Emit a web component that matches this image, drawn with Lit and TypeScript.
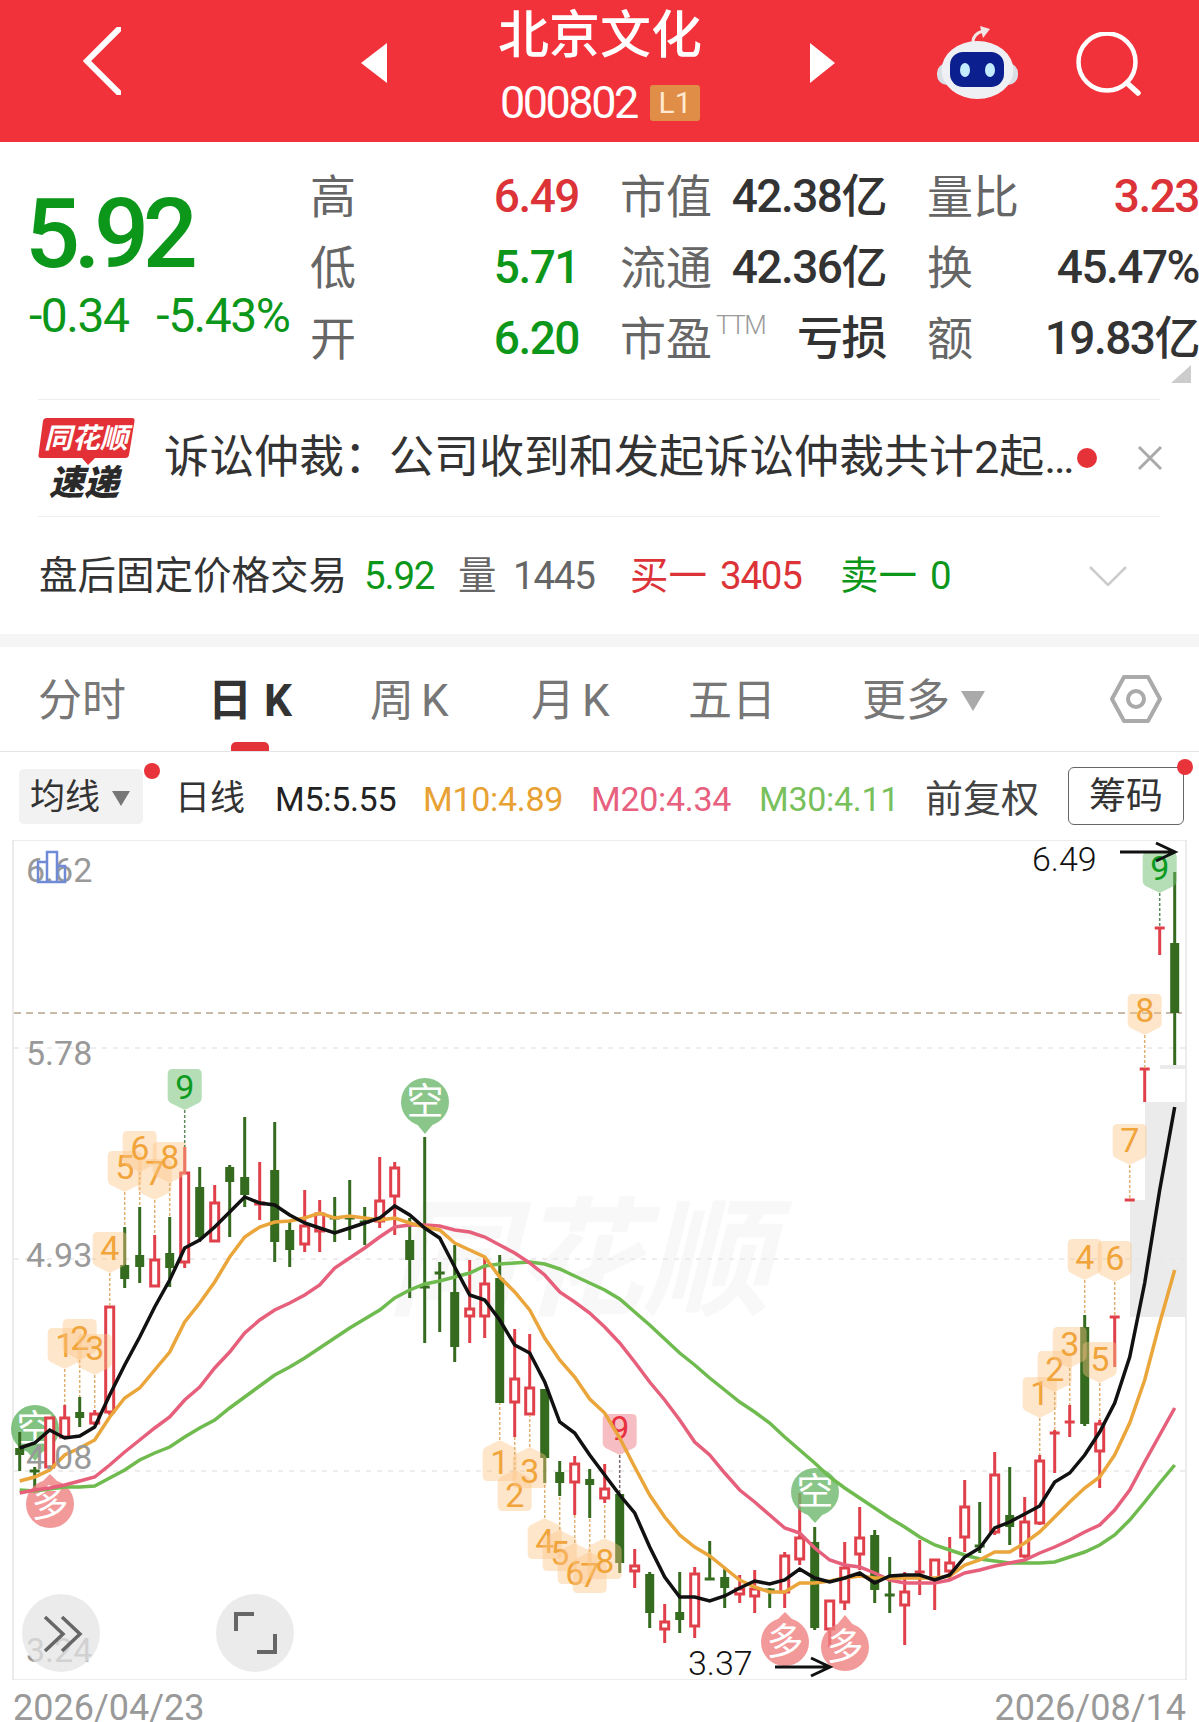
import { LitElement, html, css, svg } from "lit";
import { customElement } from "lit/decorators.js";

type C = [number, number, number, number, "r" | "g"];
const X = (i: number) => 19.7 + 15 * i;
const candles: C[] = [
  [1432,1471,1448,1455,"g"],[1467,1489,1471,1471,"g"],[1417,1468,1417,1468,"r"],[1405,1438,1417,1438,"r"],[1397,1427,1412,1418,"g"],
  [1410,1425,1413,1424,"r"],[1306,1415,1306,1413,"r"],[1227,1288,1265,1279,"g"],[1207,1283,1255,1267,"g"],[1235,1287,1259,1287,"r"],
  [1217,1287,1253,1268,"g"],[1147,1268,1172,1263,"r"],[1167,1242,1187,1237,"g"],[1185,1242,1202,1242,"r"],[1165,1237,1167,1182,"g"],
  [1117,1207,1177,1195,"g"],[1162,1220,1202,1205,"r"],[1122,1262,1170,1242,"g"],[1222,1267,1230,1250,"g"],[1190,1252,1225,1245,"r"],
  [1200,1252,1213,1232,"r"],[1197,1242,1218,1218,"g"],[1180,1240,1218,1218,"g"],[1207,1245,1222,1222,"g"],[1157,1228,1200,1222,"r"],
  [1162,1235,1167,1197,"r"],[1218,1298,1240,1260,"g"],[1137,1343,1287,1287,"g"],[1262,1332,1273,1273,"g"],[1245,1362,1292,1347,"g"],
  [1260,1343,1308,1317,"r"],[1257,1338,1283,1317,"r"],[1255,1403,1278,1403,"g"],[1329,1437,1378,1403,"r"],[1334,1415,1387,1415,"r"],
  [1389,1483,1389,1458,"g"],[1461,1496,1472,1483,"g"],[1456,1515,1463,1483,"r"],[1469,1518,1479,1485,"g"],[1464,1503,1488,1499,"r"],
  [1494,1573,1494,1563,"g"],[1549,1588,1565,1572,"r"],[1572,1628,1574,1613,"g"],[1604,1643,1621,1630,"r"],[1572,1633,1612,1620,"g"],
  [1567,1638,1573,1627,"r"],[1541,1580,1579,1579,"g"],[1567,1608,1577,1588,"g"],[1575,1603,1588,1595,"r"],[1570,1613,1588,1597,"r"],
  [1588,1608,1590,1590,"g"],[1552,1608,1555,1593,"r"],[1493,1565,1537,1560,"r"],[1527,1630,1542,1628,"g"],[1600,1647,1600,1630,"r"],
  [1542,1610,1567,1603,"r"],[1507,1570,1537,1555,"r"],[1530,1603,1535,1590,"g"],[1557,1613,1595,1595,"g"],[1572,1645,1591,1606,"r"],
  [1540,1595,1572,1572,"r"],[1560,1610,1559,1580,"r"],[1537,1580,1562,1572,"r"],[1480,1552,1506,1538,"r"],[1502,1553,1546,1546,"g"],
  [1452,1535,1474,1533,"r"],[1467,1545,1515,1527,"g"],[1497,1558,1521,1557,"r"],[1455,1525,1460,1524,"r"],[1430,1473,1433,1433,"r"],
  [1405,1437,1422,1422,"r"],[1315,1426,1327,1424,"g"],[1420,1488,1423,1452,"r"],[1316,1367,1317,1317,"r"],[1199,1201,1200,1200,"r"],
  [1068,1102,1069,1069,"r"],[927,955,928,928,"r"],[872,1065,943,1013,"g"],
];
const black = [1448,1443,1430,1438,1436,1427,1395,1365,1337,1307,1280,1248,1240,1227,1212,1197,1203,1205,1215,1223,1228,1233,1228,1223,1218,1206,1215,1228,1238,1267,1295,1300,1320,1345,1353,1382,1422,1433,1455,1475,1495,1513,1547,1577,1597,1597,1601,1596,1588,1581,1584,1580,1569,1578,1582,1578,1573,1583,1576,1575,1575,1580,1575,1557,1548,1528,1522,1514,1506,1482,1473,1455,1432,1403,1357,1283,1190,1107];
const orange = [1481,1477,1470,1455,1448,1440,1417,1398,1388,1370,1352,1322,1303,1282,1257,1237,1227,1222,1221,1218,1213,1218,1216,1218,1220,1218,1223,1227,1230,1243,1250,1257,1277,1292,1310,1338,1360,1377,1399,1413,1438,1467,1495,1517,1535,1547,1556,1568,1580,1587,1592,1592,1583,1583,1581,1578,1576,1578,1578,1578,1578,1578,1576,1565,1560,1552,1552,1543,1532,1517,1502,1488,1477,1455,1423,1380,1323,1270];
const pink = [1493,1490,1488,1485,1481,1477,1465,1452,1440,1428,1417,1400,1387,1368,1352,1333,1320,1310,1303,1295,1285,1268,1258,1248,1237,1227,1225,1225,1226,1230,1232,1237,1245,1253,1263,1275,1292,1302,1313,1327,1343,1362,1382,1400,1420,1442,1455,1473,1490,1502,1515,1528,1533,1548,1560,1565,1567,1573,1580,1583,1583,1583,1580,1573,1570,1566,1563,1560,1553,1547,1540,1532,1525,1510,1490,1462,1435,1408];
const green = [1490,1491,1489,1487,1487,1486,1478,1470,1460,1453,1447,1437,1428,1420,1408,1397,1386,1375,1367,1358,1348,1338,1328,1319,1310,1298,1290,1284,1281,1277,1273,1266,1264,1263,1262,1264,1269,1276,1283,1290,1299,1312,1325,1339,1353,1365,1378,1390,1402,1412,1423,1437,1450,1463,1477,1488,1498,1508,1518,1527,1537,1545,1550,1555,1559,1561,1563,1563,1563,1562,1557,1552,1545,1535,1520,1502,1483,1465];

type M = [string, number, number, number, number, "o" | "g" | "r"];
const downMarks: M[] = [
  ["1",3,1369,1345,1405,"o"],["2",4,1360,1338,1397,"o"],["3",5,1375,1348,1410,"o"],["4",6,1273,1248,1306,"o"],
  ["5",7,1192,1167,1227,"o"],["6",8,1172,1148,1207,"o"],["7",9,1200,1173,1235,"o"],["8",10,1183,1157,1217,"o"],["9",11,1110,1087,1147,"g"],
  ["9",40,1455,1428,1494,"r"],
  ["1",68,1418,1393,1455,"o"],["2",69,1392,1369,1430,"o"],["3",70,1368,1344,1405,"o"],["4",71,1280,1257,1315,"o"],
  ["5",72,1383,1359,1420,"o"],["6",73,1282,1258,1316,"o"],["7",74,1165,1140,1198,"o"],["8",75,1035,1010,1068,"o"],["9",76,893,868,927,"g"],
];
const upMarks: M[] = [
  ["1",32,1440,1462,1403,"o"],["2",33,1470,1495,1437,"o"],["3",34,1447,1471,1415,"o"],["4",35,1518,1541,1483,"o"],
  ["5",36,1530,1553,1496,"o"],["6",37,1543,1573,1515,"o"],["7",38,1552,1575,1518,"o"],["8",39,1538,1561,1503,"o"],
];
const kinds = {
  o: { fill: "rgba(253,196,130,.42)", text: "#f0a43a", stem: "#e0b070" },
  g: { fill: "rgba(110,190,110,.5)", text: "#0c9a20", stem: "#5c8a5c" },
  r: { fill: "rgba(235,110,120,.45)", text: "#e8303f", stem: "#7a6a6a" },
};
const path = (a: number[]) => a.map((y, i) => `${i ? "L" : "M"}${X(i).toFixed(1)} ${y}`).join(" ");

function candle(c: C, i: number) {
  const [hi, lo, t, b, k] = c;
  const x = X(i);
  const col = k === "r" ? "#e0404a" : "#356b1f";
  const wick = svg`<path d="M${x} ${hi}V${lo}" stroke=${col} stroke-width="3"/>`;
  if (t === b) return svg`${wick}<path d="M${x - 5} ${t}h10" stroke=${col} stroke-width="3"/>`;
  if (k === "g") return svg`${wick}<rect x=${x - 4.5} y=${t} width="9" height=${b - t} fill=${col}/>`;
  const topW = svg`<path d="M${x} ${hi}V${t}M${x} ${b}V${lo}" stroke=${col} stroke-width="3"/>`;
  return svg`${topW}<rect x=${x - 4} y=${t + 1} width="8" height=${Math.max(b - t - 2, 1)} fill="#fff" stroke=${col} stroke-width="3"/>`;
}
function mark(m: M, up: boolean) {
  const [d, i, tip, cy, end, kind] = m;
  const x = X(i), K = kinds[kind], s = up ? -1 : 1;
  const top = tip - s * 41;
  const p = `M${x - 12} ${top}H${x + 12}Q${x + 17} ${top} ${x + 17} ${top + s * 5}V${top + s * 29}Q${x + 17} ${top + s * 33} ${x + 12} ${top + s * 35}L${x + 2} ${tip - s}Q${x} ${tip} ${x - 2} ${tip - s}L${x - 12} ${top + s * 35}Q${x - 17} ${top + s * 33} ${x - 17} ${top + s * 29}V${top + s * 5}Q${x - 17} ${top} ${x - 12} ${top}Z`;
  return svg`<path d="M${x} ${tip}V${end}" stroke=${K.stem} stroke-width="1.5" stroke-dasharray="3 2"/>
    <path d=${p} fill=${K.fill}/>
    <text class="digit" x=${x} y=${cy + 12} fill=${K.text}>${d}</text>`;
}
function pin(x: number, cy: number, tip: number, ch: string, fill: string, op: number) {
  const s = tip > cy ? 1 : -1;
  return svg`<g opacity=${op}><circle cx=${x} cy=${cy} r="24" fill=${fill}/>
    <path d="M${x - 9} ${cy + s * 21}L${x} ${tip}L${x + 9} ${cy + s * 21}Z" fill=${fill}/>
    <text class="pinch" x=${x} y=${cy + 13} >${ch}</text></g>`;
}

@customElement("app-root")
export class AppRoot extends LitElement {
  static styles = css`
    :host { display: block; width: 1199px; height: 1722px; overflow: hidden; background: #fff; font-family: Roboto, "Noto Sans CJK SC", sans-serif; color: #333; }
    .top { display: flex; align-items: flex-start; height: 142px; background: #f2323a; color: #fff; }
    .top svg { display: block; flex: none; }
    .back { margin: 27px 0 0 83px; }
    .tri-l { margin: 43px 0 0 240px; }
    .tri-r { margin: 43px 0 0 110px; }
    .robot { margin: 25px 0 0 102px; }
    .search { margin: 32px 0 0 58px; }
    .mid { width: 200px; margin-left: 113px; flex: none; }
    .title { font: 500 51px/62px "Noto Sans CJK SC", sans-serif; margin: 0 0 0 -2px; white-space: nowrap; width: 204px; }
    .code { display: flex; align-items: center; margin-top: 23px; height: 36px; }
    .code b { font: 400 45px/52px Roboto, sans-serif; letter-spacing: -2.500px; width: 150px; }
    .l1 { width: 50px; height: 36px; background: #e08d48; color: #ffe9d0; border-radius: 3px; font: 400 30px/36px Roboto, sans-serif; text-align: center; }

    .quote { display: flex; height: 257px; padding-left: 25px; position: relative; }
    .pricecol { width: 285px; flex: none; }
    .big { font: 500 97px/110px Roboto, sans-serif; letter-spacing: -6.500px; color: #0c971b; margin-top: 37px; white-space: nowrap; }
    .chg { display: flex; font: 400 48px/56px Roboto, sans-serif; color: #0c971b; margin: -1px 0 0 4px; letter-spacing: -1.500px; white-space: nowrap; }
    .chg span + span { margin-left: 28px; }
    .qgrid { display: grid; grid-template-columns: 269px 266px 272px; column-gap: 41px; grid-auto-rows: 71px; padding-top: 18px; }
    .qgrid > div { display: flex; justify-content: space-between; align-items: center; white-space: nowrap; }
    .lb { font: 400 46px/60px "Noto Sans CJK SC", sans-serif; color: #666; margin-top: -6px; }
    .lb sup { font: 300 26px/26px Roboto, sans-serif; color: #999; vertical-align: 21px; margin-left: 4px; letter-spacing: -1.500px; }
    .v { font: 500 46px/58px Roboto, "Noto Sans CJK SC", sans-serif; color: #333; letter-spacing: -1.500px; }
    .red { color: #dc3338; }
    .grn { color: #0c971b; }
    .corner { position: absolute; right: 8px; bottom: 16px; }

    .notice { display: flex; align-items: center; height: 116px; margin: 0 39px 0 38px; border-top: 1px solid #eee; border-bottom: 1px solid #eee; }
    .notice .txt { font: 400 45px/62px Roboto, "Noto Sans CJK SC", sans-serif; color: #333; margin-left: 28px; white-space: nowrap; width: 909px; }
    .notice .dot { width: 20px; height: 20px; border-radius: 50%; background: #e53238; margin-left: 4px; flex: none; }
    .notice .x { margin-left: 40px; flex: none; }
    .logo { flex: none; display: block; margin-top: 8px; }

    .after { display: flex; align-items: center; height: 117px; padding-left: 40px; font: 400 38.500px/54px Roboto, "Noto Sans CJK SC", sans-serif; white-space: nowrap; }
    .after .a1 { color: #333; margin-left: -1px; width: 325px; }
    .after .a2 { color: #0c971b; width: 94px; letter-spacing: -1.200px; }
    .after .a3 { color: #666; width: 55px; }
    .after .a4 { color: #666; width: 117px; letter-spacing: -1.200px; }
    .after .a5 { color: #dc3338; width: 90px; }
    .after .a6 { color: #dc3338; width: 120px; letter-spacing: -1.200px; }
    .after .a7 { color: #0c971b; width: 90px; }
    .after .a8 { color: #0c971b; width: 159px; }
    .band { height: 13px; background: #f5f5f5; }

    .tabs { display: grid; grid-template-columns: 170px 162px 161px 157px 174px 246px 52px; align-items: center; height: 104px; padding-left: 38px; border-bottom: 1px solid #e4e4e4; font: 400 44px/60px Roboto, "Noto Sans CJK SC", sans-serif; color: #777; position: relative; }
    .tabs > span { padding-top: 4px; }
    .tabs > svg { margin-left: 2px; }
    .tabs .on { color: #333; font-weight: 700; }
    .tabs .k { margin-left: 7px; }
    .tabs .on .k { margin-left: 12px; }
    .more { display: flex; align-items: center; }
    .more svg { margin-left: 11px; }
    .ul { position: absolute; left: 231px; bottom: 0; width: 38px; height: 9px; background: #e33339; border-radius: 5px 5px 0 0; }

    .ma { display: flex; align-items: center; height: 88px; font: 400 35px/50px Roboto, "Noto Sans CJK SC", sans-serif; white-space: nowrap; position: relative; }
    .jx { display: flex; align-items: center; width: 124px; height: 55px; margin-left: 19px; padding: 4px 0 0 11px; box-sizing: border-box; background: #f2f2f2; border-radius: 5px; color: #333; flex: none; }
    .jx svg { margin-left: 12px; }
    .rd { position: absolute; width: 16px; height: 16px; border-radius: 50%; background: #e9333a; }
    .rd.a { left: 144px; top: 11px; }
    .rd.b { left: 1177px; top: 7px; }
    .rx, .m5, .m10, .m20, .m30, .fq { padding-top: 6px; }
    .rx { margin-left: 32px; color: #333; width: 100px; }
    .m5 { color: #222; width: 148px; font-size: 34px; letter-spacing: -.3px; }
    .m10 { color: #e8a133; width: 168px; font-size: 34px; letter-spacing: -.3px; }
    .m20 { color: #e7607e; width: 168px; font-size: 34px; letter-spacing: -.3px; }
    .m30 { color: #78c05c; width: 166px; font-size: 34px; letter-spacing: -.3px; }
    .fq { font-size: 38px; color: #444; width: 143px; }
    .cm { width: 116px; height: 58px; box-sizing: border-box; border: 1px solid #666; border-radius: 6px; font-size: 37px; line-height: 58px; text-align: center; color: #333; flex: none; }

    .chart { display: block; width: 1199px; height: 840px; }
    .chart text { font-family: Roboto, "Noto Sans CJK SC", sans-serif; }
    .axis { font-size: 34px; fill: #999; }
    .digit { font-size: 34px; text-anchor: middle; }
    .pinch { font-size: 37px; text-anchor: middle; fill: #fff; }
    .note { font-size: 34px; fill: #111; font-weight: 300; }
    .wm { font-size: 128px; font-weight: 700; font-style: italic; fill: #f8f8f8; }
    .dates { display: flex; justify-content: space-between; padding: 6px 13px 0; font: 400 36px/44px Roboto, sans-serif; color: #999; }
  `;

  render() {
    return html`
      <div class="top">
        <svg class="back" width="38" height="68" viewBox="0 0 38 68"><path d="M36 2L4 34l32 32" fill="none" stroke="#fff" stroke-width="6" stroke-linecap="round"/></svg>
        <svg class="tri-l" width="26" height="40" viewBox="0 0 26 40"><path d="M26 0V40L0 20Z" fill="#fff"/></svg>
        <div class="mid">
          <div class="title">北京文化</div>
          <div class="code"><b>000802</b><span class="l1">L1</span></div>
        </div>
        <svg class="tri-r" width="25" height="40" viewBox="0 0 25 40"><path d="M0 0V40L25 20Z" fill="#fff"/></svg>
        <svg class="robot" width="81" height="75" viewBox="0 0 81 75">
          <path d="M36 17c0-6 3-9 10-11" fill="none" stroke="#f3e6e6" stroke-width="3"/>
          <path d="M43 1l10 3-7 9z" fill="#f3e6e6"/>
          <rect x="0" y="38" width="81" height="22" rx="10" fill="#d9dde4"/>
          <ellipse cx="40.500" cy="45" rx="36" ry="29" fill="#eef0f4"/>
          <rect x="13" y="27" width="54" height="35" rx="13" fill="#0b1f8e"/>
          <ellipse cx="28" cy="45" rx="5" ry="7" fill="#c4ecff"/>
          <ellipse cx="53" cy="45" rx="5" ry="7" fill="#c4ecff"/>
        </svg>
        <svg class="search" width="66" height="66" viewBox="0 0 66 66"><circle cx="31" cy="30" r="28.500" fill="none" stroke="#fff" stroke-width="4.500"/><path d="M51 51l11 10" stroke="#fff" stroke-width="5.500" stroke-linecap="round"/></svg>
      </div>

      <div class="quote">
        <div class="pricecol">
          <div class="big">5.92</div>
          <div class="chg"><span>-0.34</span><span>-5.43%</span></div>
        </div>
        <div class="qgrid">
          <div><span class="lb">高</span><span class="v red">6.49</span></div>
          <div><span class="lb">市值</span><span class="v">42.38亿</span></div>
          <div><span class="lb">量比</span><span class="v red">3.23</span></div>
          <div><span class="lb">低</span><span class="v grn">5.71</span></div>
          <div><span class="lb">流通</span><span class="v">42.36亿</span></div>
          <div><span class="lb">换</span><span class="v">45.47%</span></div>
          <div><span class="lb">开</span><span class="v grn">6.20</span></div>
          <div><span class="lb">市盈<sup>TTM</sup></span><span class="v">亏损</span></div>
          <div><span class="lb">额</span><span class="v">19.83亿</span></div>
        </div>
        <svg class="corner" width="20" height="18" viewBox="0 0 20 18"><path d="M20 0V18H0Z" fill="#ccc"/></svg>
      </div>

      <div class="notice">
        <svg class="logo" width="98" height="88" viewBox="0 0 98 88">
          <path d="M5 3Q5.500 0 9 0H94Q97 0 96.500 3L91 37Q90.500 40 87 40H57L50 47L44 40H3Q0 40 .500 37Z" fill="#e23036"/>
          <text x="48" y="30" text-anchor="middle" font-size="28" font-weight="700" font-style="italic" fill="#fff" font-family="Noto Sans CJK SC, sans-serif">同花顺</text>
          <text x="46" y="77" text-anchor="middle" font-size="35" font-weight="900" font-style="italic" fill="#2a2a2a" font-family="Noto Sans CJK SC, sans-serif">速递</text>
        </svg>
        <span class="txt">诉讼仲裁：公司收到和发起诉讼仲裁共计2起…</span>
        <span class="dot"></span>
        <svg class="x" width="26" height="26" viewBox="0 0 26 26"><path d="M2 2l22 22M24 2L2 24" stroke="#aaa" stroke-width="3"/></svg>
      </div>

      <div class="after">
        <span class="a1">盘后固定价格交易</span><span class="a2">5.92</span><span class="a3">量</span><span class="a4">1445</span><span class="a5">买一</span><span class="a6">3405</span><span class="a7">卖一</span><span class="a8">0</span>
        <svg width="38" height="20" viewBox="0 0 38 20"><path d="M1 1l18 18L37 1" fill="none" stroke="#ccc" stroke-width="2.500"/></svg>
      </div>
      <div class="band"></div>

      <div class="tabs">
        <span>分时</span>
        <span class="on">日<span class="k">K</span></span>
        <span>周<span class="k">K</span></span>
        <span>月<span class="k">K</span></span>
        <span>五日</span>
        <span class="more">更多<svg width="24" height="20" viewBox="0 0 24 20"><path d="M0 0H24L12 20Z" fill="#aaa"/></svg></span>
        <svg width="52" height="48" viewBox="0 0 52 48"><path d="M14 2H38L50 24L38 46H14L2 24Z" fill="none" stroke="#aaa" stroke-width="4" stroke-linejoin="round"/><circle cx="26" cy="24" r="8" fill="none" stroke="#aaa" stroke-width="4"/></svg>
        <i class="ul"></i>
      </div>

      <div class="ma">
        <div class="jx">均线<svg width="18" height="15" viewBox="0 0 18 15"><path d="M0 0H18L9 15Z" fill="#777"/></svg></div>
        <span class="rx">日线</span>
        <span class="m5">M5:5.55</span><span class="m10">M10:4.89</span><span class="m20">M20:4.34</span><span class="m30">M30:4.11</span>
        <span class="fq">前复权</span><span class="cm">筹码</span>
        <i class="rd a"></i><i class="rd b"></i>
      </div>

      <svg class="chart" viewBox="0 840 1199 840">
        <rect x="13" y="840" width="1173" height="840" fill="#fff" stroke="#e6e6e6" stroke-width="1.500"/>
        <path d="M1130 1200H1145V1102H1186V1317H1130ZM1160 1065H1186V1069H1160Z" fill="#ebebeb"/>
        <text class="wm" x="387" y="1305">同花顺</text>
        <path d="M14 1048H1185M14 1259H1185M14 1471H1185" stroke="#e8e8e8" stroke-width="1.500" stroke-dasharray="5 6"/>
        <path d="M14 1013H1182" stroke="#b5a58c" stroke-width="1.500" stroke-dasharray="7 5"/>
        ${pin(35, 1429, 1461, "空", "#6db96d", 0.85)}
        ${candles.map((c, i) => candle(c, i))}
        ${downMarks.map((m) => mark(m, false))}
        ${upMarks.map((m) => mark(m, true))}
        ${pin(425, 1102, 1134, "空", "#6db96d", 0.8)}
        ${pin(815, 1492, 1523, "空", "#6db96d", 0.8)}
        ${pin(50, 1504, 1474, "多", "#f08080", 0.8)}
        ${pin(785, 1642, 1612, "多", "#f08080", 0.8)}
        ${pin(845, 1647, 1615, "多", "#f08080", 0.8)}
        <path d=${path(green)} fill="none" stroke="#6fbb4f" stroke-width="3.500"/>
        <path d=${path(pink)} fill="none" stroke="#e6607c" stroke-width="3.500"/>
        <path d=${path(orange)} fill="none" stroke="#eaa53b" stroke-width="3.500"/>
        <path d=${path(black)} fill="none" stroke="#111" stroke-width="3.500"/>
        <text class="axis" x="26" y="882">6.62</text>
        <text class="axis" x="26" y="1065">5.78</text>
        <text class="axis" x="26" y="1267">4.93</text>
        <text class="axis" x="26" y="1469">4.08</text>
        <text class="axis" x="26" y="1662">3.24</text>
        <path d="M38 882V862H47V852H57V866H65V882Z M47 862V882M57 866V882" fill="none" stroke="#6f8bd6" stroke-width="2.500"/>
        <text class="note" x="1032" y="871">6.49</text>
        <path d="M1120 852H1174M1156 843L1175 852L1156 861" fill="none" stroke="#111" stroke-width="3"/>
        <text class="note" x="688" y="1675">3.37</text>
        <path d="M775 1667H829M811 1658L830 1667L811 1676" fill="none" stroke="#111" stroke-width="3"/>
        <circle cx="61" cy="1633" r="39" fill="rgba(228,228,228,.75)"/>
        <circle cx="255" cy="1633" r="39" fill="rgba(228,228,228,.75)"/>
        <path d="M45 1617L63 1634L45 1651M62 1617L80 1634L62 1651" fill="none" stroke="#666" stroke-width="3.500"/>
        <path d="M236 1631V1614H254M257 1652H275V1634" fill="none" stroke="#666" stroke-width="4"/>
      </svg>
      <div class="dates"><span>2026/04/23</span><span>2026/08/14</span></div>
    `;
  }
}
